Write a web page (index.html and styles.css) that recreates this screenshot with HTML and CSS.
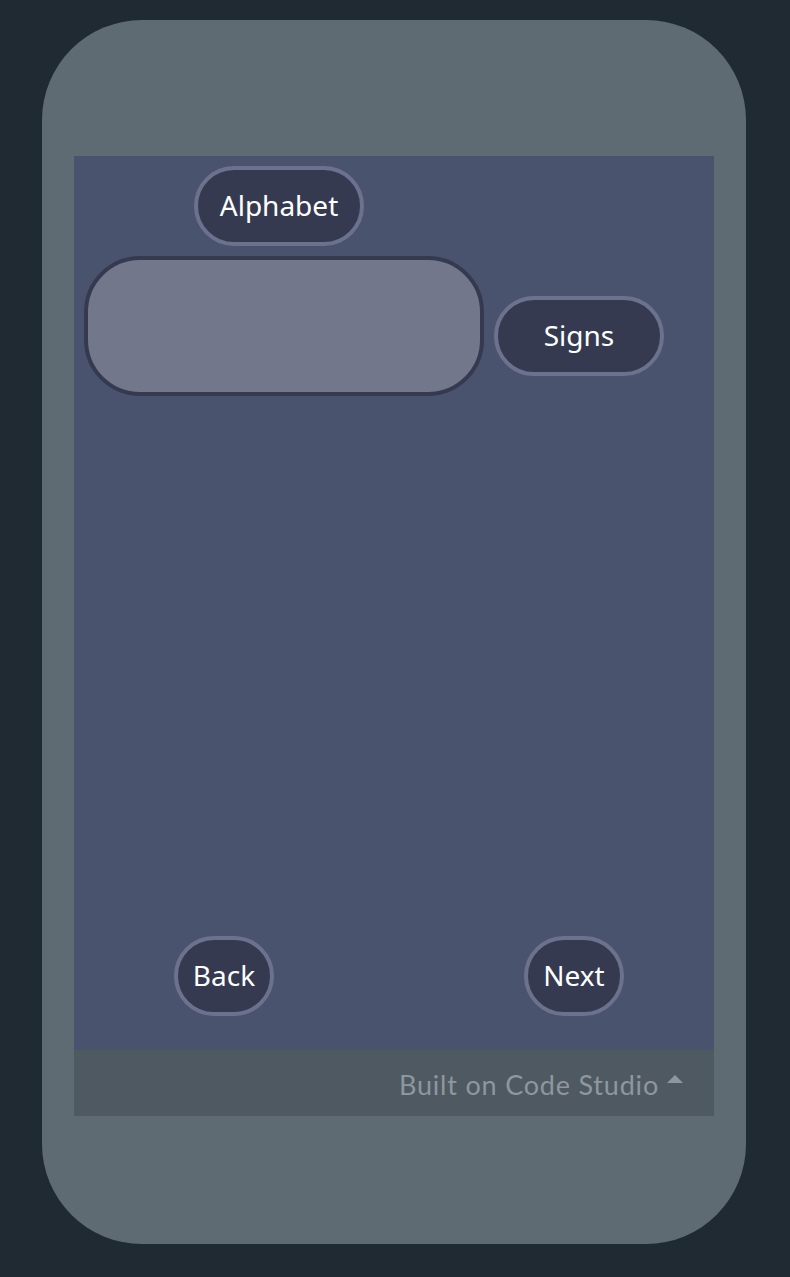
FILE: index.html
```html
<!DOCTYPE html>
<html>
<head>
<meta charset="utf-8">
<link rel="stylesheet" href="styles.css">
</head>
<body>
<div class="frame">
  <div class="screen">
    <div class="app">
      <div class="row-top">
        <button class="btn btn-alpha">Alphabet</button>
      </div>
      <div class="row-mid">
        <div class="textbox"></div>
        <button class="btn btn-signs">Signs</button>
      </div>
      <div class="row-nav">
        <button class="btn btn-small">Back</button>
        <button class="btn btn-small btn-next">Next</button>
      </div>
    </div>
    <div class="footer">
      <span class="footer-text">Built on Code Studio</span>
      <svg class="caret" width="18" height="10" viewBox="0 0 18 10"><path d="M1 9 L9 1 L17 9 Z" fill="#8e979f"/></svg>
    </div>
  </div>
</div>
</body>
</html>
```
FILE: styles.css
```css
html, body {
  margin: 0;
  padding: 0;
  background: #202a33;
}
body {
  width: 790px;
  height: 1277px;
  overflow: hidden;
}
.frame {
  margin: 20px 0 0 42px;
  width: 704px;
  height: 1224px;
  background: #5e6b72;
  border-radius: 100px;
  padding-top: 136px;
  padding-left: 32px;
  box-sizing: border-box;
}
.screen {
  width: 640px;
  display: flex;
  flex-direction: column;
}
.app {
  height: 894px;
  background: #4a536e;
  display: flex;
  flex-direction: column;
}
.btn {
  box-sizing: border-box;
  height: 80px;
  border: 4px solid #6c728e;
  background: #353a50;
  color: #ffffff;
  border-radius: 40px;
  font-family: "Noto Sans", "Open Sans", sans-serif;
  font-size: 28px;
  padding: 0 0 2px 0;
  margin: 0;
  line-height: 1;
}
.row-top {
  display: flex;
  padding: 10px 0 0 120px;
}
.btn-alpha { width: 170px; }
.row-mid {
  display: flex;
  align-items: flex-start;
  padding: 10px 0 0 10px;
  gap: 10px;
}
.textbox {
  box-sizing: border-box;
  width: 400px;
  height: 140px;
  background: #72778c;
  border: 4px solid #353a50;
  border-radius: 56px;
}
.btn-signs {
  width: 170px;
  margin-top: 40px;
}
.row-nav {
  margin-top: auto;
  margin-bottom: 34px;
  display: flex;
  padding-left: 100px;
  gap: 250px;
}
.btn-small { width: 100px; }
.footer {
  height: 66px;
  background: #4f5961;
  display: flex;
  align-items: center;
  justify-content: flex-end;
  padding-right: 30px;
  gap: 7px;
}
.footer-text {
  font-family: "Lato", "Inter", sans-serif;
  font-size: 27px;
  letter-spacing: 0.8px;
  color: #8e979f;
  margin-top: 2px;
}
.caret {
  margin-bottom: 8px;
}
```
